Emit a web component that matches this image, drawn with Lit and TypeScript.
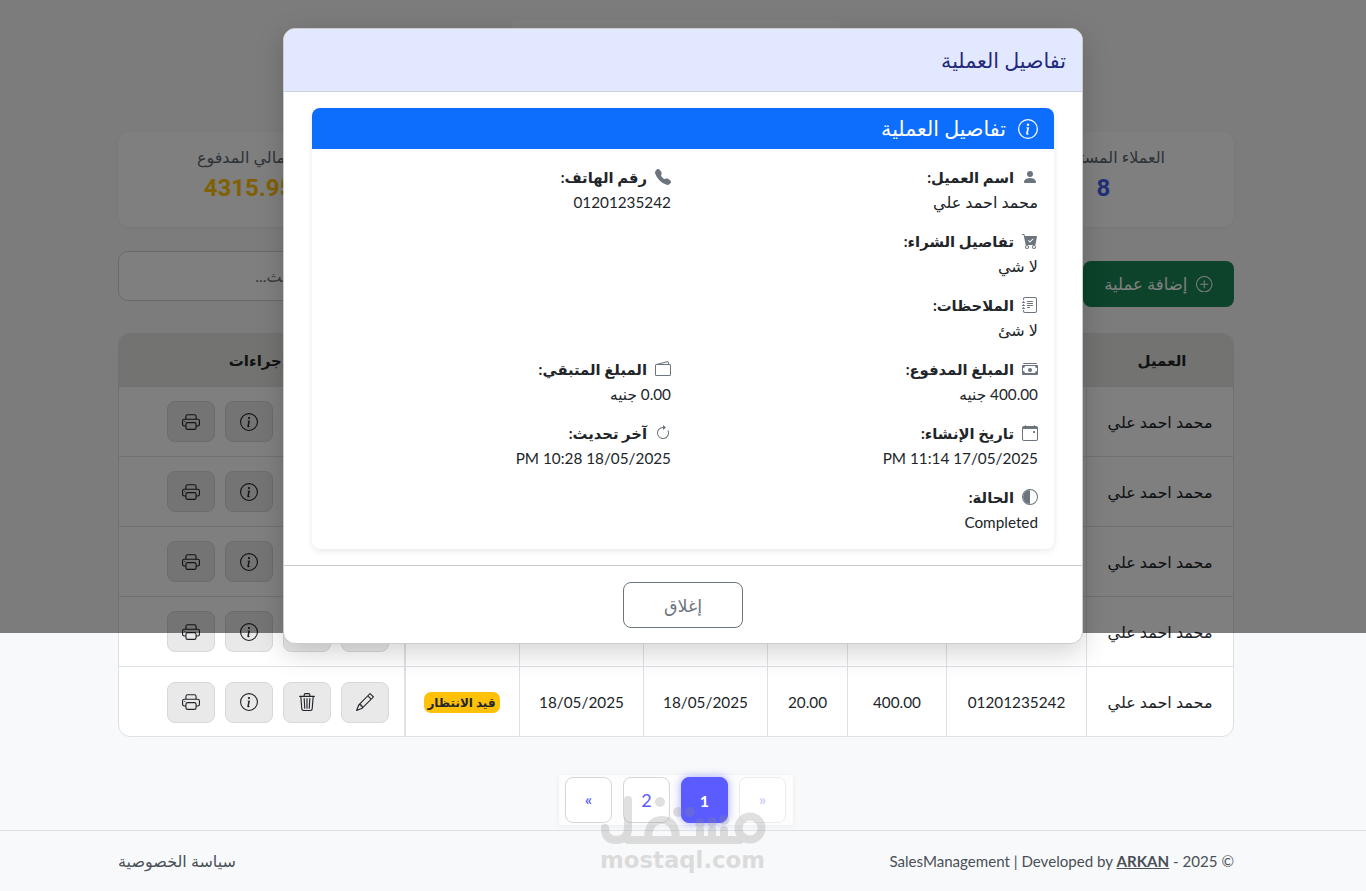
import { LitElement, html, css, svg } from "lit";
import { customElement } from "lit/decorators.js";

const I: Record<string, any> = {
  info: svg`<path d="M8 15A7 7 0 1 1 8 1a7 7 0 0 1 0 14m0 1A8 8 0 1 0 8 0a8 8 0 0 0 0 16"/><path d="m8.93 6.588-2.29.287-.082.38.45.083c.294.07.352.176.288.469l-.738 3.468c-.194.897.105 1.319.808 1.319.545 0 1.178-.252 1.465-.598l.088-.416c-.2.176-.492.246-.686.246-.275 0-.375-.193-.304-.533zM9 4.5a1 1 0 1 1-2 0 1 1 0 0 1 2 0"/>`,
  printer: svg`<path d="M2.5 8a.5.5 0 1 0 0-1 .5.5 0 0 0 0 1"/><path d="M5 1a2 2 0 0 0-2 2v2H2a2 2 0 0 0-2 2v3a2 2 0 0 0 2 2h1v1a2 2 0 0 0 2 2h6a2 2 0 0 0 2-2v-1h1a2 2 0 0 0 2-2V7a2 2 0 0 0-2-2h-1V3a2 2 0 0 0-2-2zM4 3a1 1 0 0 1 1-1h6a1 1 0 0 1 1 1v2H4zm1 5a2 2 0 0 0-2 2v1H2a1 1 0 0 1-1-1V7a1 1 0 0 1 1-1h12a1 1 0 0 1 1 1v3a1 1 0 0 1-1 1h-1v-1a2 2 0 0 0-2-2zm7 2v3a1 1 0 0 1-1 1H5a1 1 0 0 1-1-1v-3a1 1 0 0 1 1-1h6a1 1 0 0 1 1 1"/>`,
  trash: svg`<path d="M6.5 1h3a.5.5 0 0 1 .5.5v1H6v-1a.5.5 0 0 1 .5-.5M11 2.5v-1A1.5 1.5 0 0 0 9.5 0h-3A1.5 1.5 0 0 0 5 1.5v1H1.5a.5.5 0 0 0 0 1h.538l.853 10.66A2 2 0 0 0 4.885 16h6.23a2 2 0 0 0 1.994-1.84l.853-10.66h.538a.5.5 0 0 0 0-1zm1.958 1-.846 10.58a1 1 0 0 1-.997.92h-6.23a1 1 0 0 1-.997-.92L3.042 3.5zm-7.487 1a.5.5 0 0 1 .528.47l.5 8.5a.5.5 0 0 1-.998.06L5 5.03a.5.5 0 0 1 .47-.53Zm5.058 0a.5.5 0 0 1 .47.53l-.5 8.5a.5.5 0 1 1-.998-.06l.5-8.5a.5.5 0 0 1 .528-.47M8 4.5a.5.5 0 0 1 .5.5v8.5a.5.5 0 0 1-1 0V5a.5.5 0 0 1 .5-.5"/>`,
  pencil: svg`<path d="M12.146.146a.5.5 0 0 1 .708 0l3 3a.5.5 0 0 1 0 .708l-10 10a.5.5 0 0 1-.168.11l-5 2a.5.5 0 0 1-.65-.65l2-5a.5.5 0 0 1 .11-.168zM11.207 2.5 13.5 4.793 14.793 3.5 12.5 1.207zm1.586 3L10.5 3.207 4 9.707V10h.5a.5.5 0 0 1 .5.5v.5h.5a.5.5 0 0 1 .5.5v.5h.293zm-9.761 5.175-.106.106-1.528 3.821 3.821-1.528.106-.106A.5.5 0 0 1 5 12.5V12h-.5a.5.5 0 0 1-.5-.5V11h-.5a.5.5 0 0 1-.468-.325"/>`,
  person: svg`<path d="M3 14s-1 0-1-1 1-4 6-4 6 3 6 4-1 1-1 1zm5-6a3 3 0 1 0 0-6 3 3 0 0 0 0 6"/>`,
  phone: svg`<path fill-rule="evenodd" d="M1.885.511a1.745 1.745 0 0 1 2.61.163L6.29 2.98c.329.423.445.974.315 1.494l-.547 2.19a.68.68 0 0 0 .178.643l2.457 2.457a.68.68 0 0 0 .644.178l2.189-.547a1.75 1.75 0 0 1 1.494.315l2.306 1.794c.829.645.905 1.87.163 2.611l-1.034 1.034c-.74.74-1.846 1.065-2.877.702a18.6 18.6 0 0 1-7.01-4.42 18.6 18.6 0 0 1-4.42-7.009c-.362-1.03-.037-2.137.703-2.877z"/>`,
  cart: svg`<path d="M.5 1a.5.5 0 0 0 0 1h1.11l.401 1.607 1.498 7.985A.5.5 0 0 0 4 12h1a2 2 0 1 0 0 4 2 2 0 0 0 0-4h7a2 2 0 1 0 0 4 2 2 0 0 0 0-4h1a.5.5 0 0 0 .491-.408l1.5-8A.5.5 0 0 0 14.5 3H2.89l-.405-1.621A.5.5 0 0 0 2 1zM6 14a1 1 0 1 1-2 0 1 1 0 0 1 2 0m7 0a1 1 0 1 1-2 0 1 1 0 0 1 2 0m-1.646-7.646-3 3a.5.5 0 0 1-.708 0l-1.5-1.5a.5.5 0 1 1 .708-.708L8 8.293l2.646-2.647a.5.5 0 0 1 .708.708"/>`,
  journal: svg`<path d="M5 10.5a.5.5 0 0 1 .5-.5h2a.5.5 0 0 1 0 1h-2a.5.5 0 0 1-.5-.5m0-2a.5.5 0 0 1 .5-.5h5a.5.5 0 0 1 0 1h-5a.5.5 0 0 1-.5-.5m0-2a.5.5 0 0 1 .5-.5h5a.5.5 0 0 1 0 1h-5a.5.5 0 0 1-.5-.5m0-2a.5.5 0 0 1 .5-.5h5a.5.5 0 0 1 0 1h-5a.5.5 0 0 1-.5-.5"/><path d="M3 0h10a2 2 0 0 1 2 2v12a2 2 0 0 1-2 2H3a2 2 0 0 1-2-2v-1h1v1a1 1 0 0 0 1 1h10a1 1 0 0 0 1-1V2a1 1 0 0 0-1-1H3a1 1 0 0 0-1 1v1H1V2a2 2 0 0 1 2-2"/><path d="M1 5v-.5a.5.5 0 0 1 1 0V5h.5a.5.5 0 0 1 0 1h-2a.5.5 0 0 1 0-1zm0 3v-.5a.5.5 0 0 1 1 0V8h.5a.5.5 0 0 1 0 1h-2a.5.5 0 0 1 0-1zm0 3v-.5a.5.5 0 0 1 1 0v.5h.5a.5.5 0 0 1 0 1h-2a.5.5 0 0 1 0-1z"/>`,
  cash: svg`<path d="M1 3a1 1 0 0 1 1-1h12a1 1 0 0 1 1 1zm7 8a2 2 0 1 0 0-4 2 2 0 0 0 0 4"/><path d="M0 5a1 1 0 0 1 1-1h14a1 1 0 0 1 1 1v8a1 1 0 0 1-1 1H1a1 1 0 0 1-1-1zm3 0a2 2 0 0 1-2 2v3a2 2 0 0 1 2 2h10a2 2 0 0 1 2-2V7a2 2 0 0 1-2-2z"/>`,
  wallet: svg`<path d="M12.136.326A1.5 1.5 0 0 1 14 1.78V3h.5A1.5 1.5 0 0 1 16 4.5v9a1.5 1.5 0 0 1-1.5 1.5h-13A1.5 1.5 0 0 1 0 13.5v-9a1.5 1.5 0 0 1 1.432-1.499zM5.562 3H13V1.78a.5.5 0 0 0-.621-.484zM1.5 4a.5.5 0 0 0-.5.5v9a.5.5 0 0 0 .5.5h13a.5.5 0 0 0 .5-.5v-9a.5.5 0 0 0-.5-.5z"/>`,
  calendar: svg`<path d="M11 6.5a.5.5 0 0 1 .5-.5h1a.5.5 0 0 1 .5.5v1a.5.5 0 0 1-.5.5h-1a.5.5 0 0 1-.5-.5z"/><path d="M3.5 0a.5.5 0 0 1 .5.5V1h8V.5a.5.5 0 0 1 1 0V1h1a2 2 0 0 1 2 2v11a2 2 0 0 1-2 2H2a2 2 0 0 1-2-2V3a2 2 0 0 1 2-2h1V.5a.5.5 0 0 1 .5-.5M1 4v10a1 1 0 0 0 1 1h12a1 1 0 0 0 1-1V4z"/>`,
  clock: svg`<path fill-rule="evenodd" d="M8 3a5 5 0 1 0 4.546 2.914.5.5 0 0 1 .908-.417A6 6 0 1 1 8 2z"/><path d="M8 4.466V.534a.25.25 0 0 1 .41-.192l2.36 1.966c.12.1.12.284 0 .384L8.41 4.658A.25.25 0 0 1 8 4.466"/>`,
  half: svg`<path d="M8 15A7 7 0 1 1 8 1z"/><path d="M8 16A8 8 0 1 1 8 0a8 8 0 0 1 0 16m0-1A7 7 0 1 0 8 1a7 7 0 0 0 0 14"/>`,
  plus: svg`<path d="M8 15A7 7 0 1 1 8 1a7 7 0 0 1 0 14m0 1A8 8 0 1 0 8 0a8 8 0 0 0 0 16"/><path d="M8 4a.5.5 0 0 1 .5.5v3h3a.5.5 0 0 1 0 1h-3v3a.5.5 0 0 1-1 0v-3h-3a.5.5 0 0 1 0-1h3v-3A.5.5 0 0 1 8 4"/>`,
};

const icon = (n: string) => html`<svg class="bi" viewBox="0 0 16 16" fill="currentColor">${I[n]}</svg>`;

const FIELDS: { icon: string; label: string; value: string; wide?: boolean; ltr?: boolean; num?: boolean }[] = [
  { icon: "person", label: "اسم العميل:", value: "محمد احمد علي" },
  { icon: "phone", label: "رقم الهاتف:", value: "01201235242", num: true },
  { icon: "cart", label: "تفاصيل الشراء:", value: "لا شي", wide: true },
  { icon: "journal", label: "الملاحظات:", value: "لا شئ", wide: true },
  { icon: "cash", label: "المبلغ المدفوع:", value: "400.00 جنيه", num: true },
  { icon: "wallet", label: "المبلغ المتبقي:", value: "0.00 جنيه", num: true },
  { icon: "calendar", label: "تاريخ الإنشاء:", value: "PM 11:14 17/05/2025", ltr: true, num: true },
  { icon: "clock", label: "آخر تحديث:", value: "PM 10:28 18/05/2025", ltr: true, num: true },
  { icon: "half", label: "الحالة:", value: "Completed", wide: true, num: true },
];

@customElement("app-root")
export class AppRoot extends LitElement {
  static styles = css`
    :host { display: block; position: relative; height: 891px; overflow: hidden; background: #f8f9fa; color: #212529;
      font-family: Lato, Roboto, "DejaVu Sans", sans-serif; font-size: 16px; }
    * { box-sizing: border-box; }
    .bi { width: 1em; height: 1em; display: block; flex: none; }
    .n { font-size: 15.3px; }
    .page { direction: rtl; height: 830px; padding: 20px 132px 0 118px; }
    .main { width: 1116px; }
    .title-box { width: 330px; height: 90px; margin: 0 auto 22px; background: #fff; border-radius: 8px; }
    .stats { display: grid; grid-template-columns: repeat(4, 1fr); gap: 24px; height: 95px; margin-bottom: 24px; }
    .stat { background: #fff; border-radius: 12px; box-shadow: 0 1px 4px rgba(0,0,0,.05); text-align: center; padding-top: 14px; }
    .stat .k { color: #5c6670; font-size: 16px; line-height: 22px; }
    .stat .v { font-family: Roboto, sans-serif; font-size: 24px; font-weight: 700; line-height: 40px; }
    .gold { color: #ffc107; } .blue { color: #4361ee; } .green { color: #198754; } .red { color: #dc3545; }
    .tools { display: flex; justify-content: space-between; align-items: flex-start; height: 82px; }
    .add { margin-top: 10px; width: 151px; height: 46px; border: 0; border-radius: 8px; background: #198754; color: #fff;
      display: flex; align-items: center; justify-content: center; gap: 9px; font: inherit; font-size: 16.5px; }
    .search { width: 194px; height: 50px; border: 1px solid #ced4da; border-radius: 10px; background: #fff; color: #6c757d;
      display: flex; align-items: center; padding: 0 14px; font-size: 16px; }
    .table-wrap { border: 1px solid #dee2e6; border-radius: 12px; overflow: hidden; background: #fff; height: 404px; }
    table { border-collapse: separate; border-spacing: 0; table-layout: fixed; width: 1114px; }
    th, td { padding: 0; text-align: center; border-left: 1px solid #dee2e6; border-bottom: 1px solid #dee2e6; font-weight: 400; }
    th { height: 53px; padding-left: 4px; background: #e6e6e2; font-size: 15px; font-weight: 700; }
    td { height: 70px; }
    tr:last-child td { border-bottom: 0; }
    th:last-child, td:last-child { border-left: 0; border-right: 1px solid #dee2e6; }
    .c1 { width: 147px; } .c2 { width: 140px; } .c3 { width: 99px; } .c4 { width: 80px; }
    .c5, .c6 { width: 124px; } .c7 { width: 114px; } .c8 { width: 286px; }
    .acts { display: flex; gap: 10px; padding-right: 15px; }
    .act { width: 48px; height: 41px; display: flex; align-items: center; justify-content: center; background: #e9e9e9;
      border: 1px solid #d8d8d8; border-radius: 8px; font-size: 18px; color: #212529; }
    .badge { display: inline-block; width: 76px; height: 21px; line-height: 21px; margin-right: 2px; background: #ffc107; border-radius: 7px; font-size: 12px; font-weight: 700; }
    .pager { direction: ltr; width: 234px; height: 50px; margin: 38px auto 0; padding: 2px 7px 2px 6px; display: flex; gap: 11px;
      background: #fdfdfd; box-shadow: 0 1px 6px rgba(0,0,0,.06); position: relative; }
    .pg { width: 47px; height: 46px; display: flex; align-items: center; justify-content: center; border: 1px solid #d6d6d6;
      border-radius: 8px; background: #fff; color: #5a5cff; font-size: 18px; }
    .pg.small { font-family: Roboto, sans-serif; font-size: 14px; font-weight: 700; }
    .pg.on { background: #5a5cff; border-color: #5a5cff; color: #fff; font-size: 16px; font-weight: 700; box-shadow: 0 0 8px rgba(90,92,255,.55); }
    .pg.off { color: #c9caff; border-color: #ececec; }
    footer { direction: rtl; height: 61px; border-top: 1px solid #dee2e6; padding: 0 132px 0 118px; display: flex; justify-content: space-between; align-items: center; color: #495057; font-size: 16px; }
    footer .copy { direction: ltr; font-size: 15.1px; }
    footer b { text-decoration: underline; font-weight: 700; }
    .backdrop { position: absolute; left: 0; top: 0; right: 0; height: 633px; background: rgba(0,0,0,.5); }
    .modal { direction: rtl; position: absolute; left: 283px; top: 28px; width: 800px; height: 616px; background: #fff; border: 1px solid #ccc;
      border-radius: 12px; box-shadow: 0 8px 28px rgba(0,0,0,.18); overflow: hidden; display: flex; flex-direction: column; }
    .m-head { height: 63px; flex: none; background: #e2e8ff; border-bottom: 1px solid #ced2dc; display: flex; align-items: center; padding: 0 16px; font-size: 20.6px; color: #1f2a7c; }
    .m-body { padding: 16px 28px 16px 28px; }
    .card { border-radius: 8px; box-shadow: 0 2px 6px rgba(0,0,0,.09); overflow: hidden; }
    .card-h { height: 41px; background: #0d6efd; color: #fff; display: flex; align-items: center; gap: 12px; padding: 0 16px; font-size: 20.6px; }
    .card-h .bi { font-size: 20px; }
    .card-b { display: grid; grid-template-columns: 1fr 1fr; column-gap: 24px; row-gap: 15px; padding: 16px 16px 15px; }
    .f { height: 49px; }
    .f.wide { grid-column: 1 / -1; }
    .f .l { display: flex; align-items: center; gap: 8px; height: 24px; font-weight: 700; margin-bottom: 1px; font-size: 14.8px; }
    .f .l .bi { color: #6c757d; font-size: 16px; }
    .f .val { height: 24px; line-height: 24px; text-align: right; }
    .f .val.ltr { direction: ltr; }
    .m-foot { border-top: 1px solid #ccc; padding: 16px 16px 15px; display: flex; justify-content: center; }
    .close { width: 120px; height: 46px; background: #fff; border: 1px solid #6c757d; border-radius: 8px; color: #6c757d; font: inherit; font-size: 17.5px; }
    .mark { position: absolute; left: 590px; top: 790px; width: 190px; height: 90px; pointer-events: none; color: #8a8a8a; opacity: .26; }
    .mark svg { position: absolute; left: 0; top: 0; }
    .mark span { position: absolute; left: 10px; top: 55px; font: 700 22.8px/30px "DejaVu Sans", sans-serif; white-space: nowrap; }
  `;

  render() {
    const rows = [0, 1, 2, 3, 4];
    return html`
      <div class="page"><div class="main">
        <div class="title-box"></div>
        <div class="stats">
          <div class="stat"><div class="k">العملاء المستفيدين</div><div class="v blue">8</div></div>
          <div class="stat"><div class="k">إجمالي المبيعات</div><div class="v green">5000.00</div></div>
          <div class="stat"><div class="k">إجمالي المتبقي</div><div class="v red">684.05</div></div>
          <div class="stat"><div class="k">إجمالي المدفوع</div><div class="v gold">4315.95</div></div>
        </div>
        <div class="tools">
          <button class="add">${icon("plus")}<span>إضافة عملية</span></button>
          <div class="search">بحث...</div>
        </div>
        <div class="table-wrap"><table>
          <thead><tr>
            <th class="c1">العميل</th><th class="c2">الهاتف</th><th class="c3">المدفوع</th><th class="c4">المتبقي</th>
            <th class="c5">الإنشاء</th><th class="c6">التحديث</th><th class="c7">الحالة</th><th class="c8">الإجراءات</th>
          </tr></thead>
          <tbody>${rows.map(() => html`<tr>
            <td>محمد احمد علي</td><td class="n">01201235242</td><td class="n">400.00</td><td class="n">20.00</td><td class="n">18/05/2025</td><td class="n">18/05/2025</td>
            <td><span class="badge">قيد الانتظار</span></td>
            <td><div class="acts">
              <div class="act">${icon("pencil")}</div><div class="act">${icon("trash")}</div>
              <div class="act">${icon("info")}</div><div class="act">${icon("printer")}</div>
            </div></td>
          </tr>`)}</tbody>
        </table></div>
        <nav class="pager">
          <div class="pg small">«</div><div class="pg">2</div><div class="pg on">1</div><div class="pg small off">»</div>
        </nav>
      </div></div>
      <footer>
        <div class="copy">SalesManagement | Developed by <b>ARKAN</b> - 2025 ©</div>
        <div>سياسة الخصوصية</div>
      </footer>
      <div class="mark">
        <svg width="190" height="60" viewBox="0 0 190 60" fill="none" stroke="currentColor" stroke-width="8" stroke-linecap="round">
          <path d="M38 10V38Q38 50 26 50Q15 50 15 38"/>
          <path d="M38 50H150"/>
          <circle cx="160" cy="38" r="11.5"/>
          <path d="M58 50Q58 30 72 30Q86 30 86 50"/>
          <path d="M110 50V40M122 50V40M134 50V40"/>
          <g fill="currentColor" stroke="none">
            <circle cx="70" cy="12" r="5"/><circle cx="88" cy="22" r="5"/><circle cx="100" cy="22" r="5"/>
            <circle cx="110" cy="33" r="5"/><circle cx="122" cy="32" r="5"/><circle cx="134" cy="30" r="5"/>
          </g>
        </svg>
        <span>mostaql.com</span>
      </div>
      <div class="backdrop"></div>
      <div class="modal">
        <div class="m-head">تفاصيل العملية</div>
        <div class="m-body">
          <div class="card">
            <div class="card-h">${icon("info")}<span>تفاصيل العملية</span></div>
            <div class="card-b">
              ${FIELDS.map((f) => html`<div class="f ${f.wide ? "wide" : ""}">
                <div class="l">${icon(f.icon)}<span>${f.label}</span></div>
                <div class="val ${f.ltr ? "ltr" : ""} ${f.num ? "n" : ""}">${f.value}</div>
              </div>`)}
            </div>
          </div>
        </div>
        <div class="m-foot"><button class="close">إغلاق</button></div>
      </div>
    `;
  }
}
